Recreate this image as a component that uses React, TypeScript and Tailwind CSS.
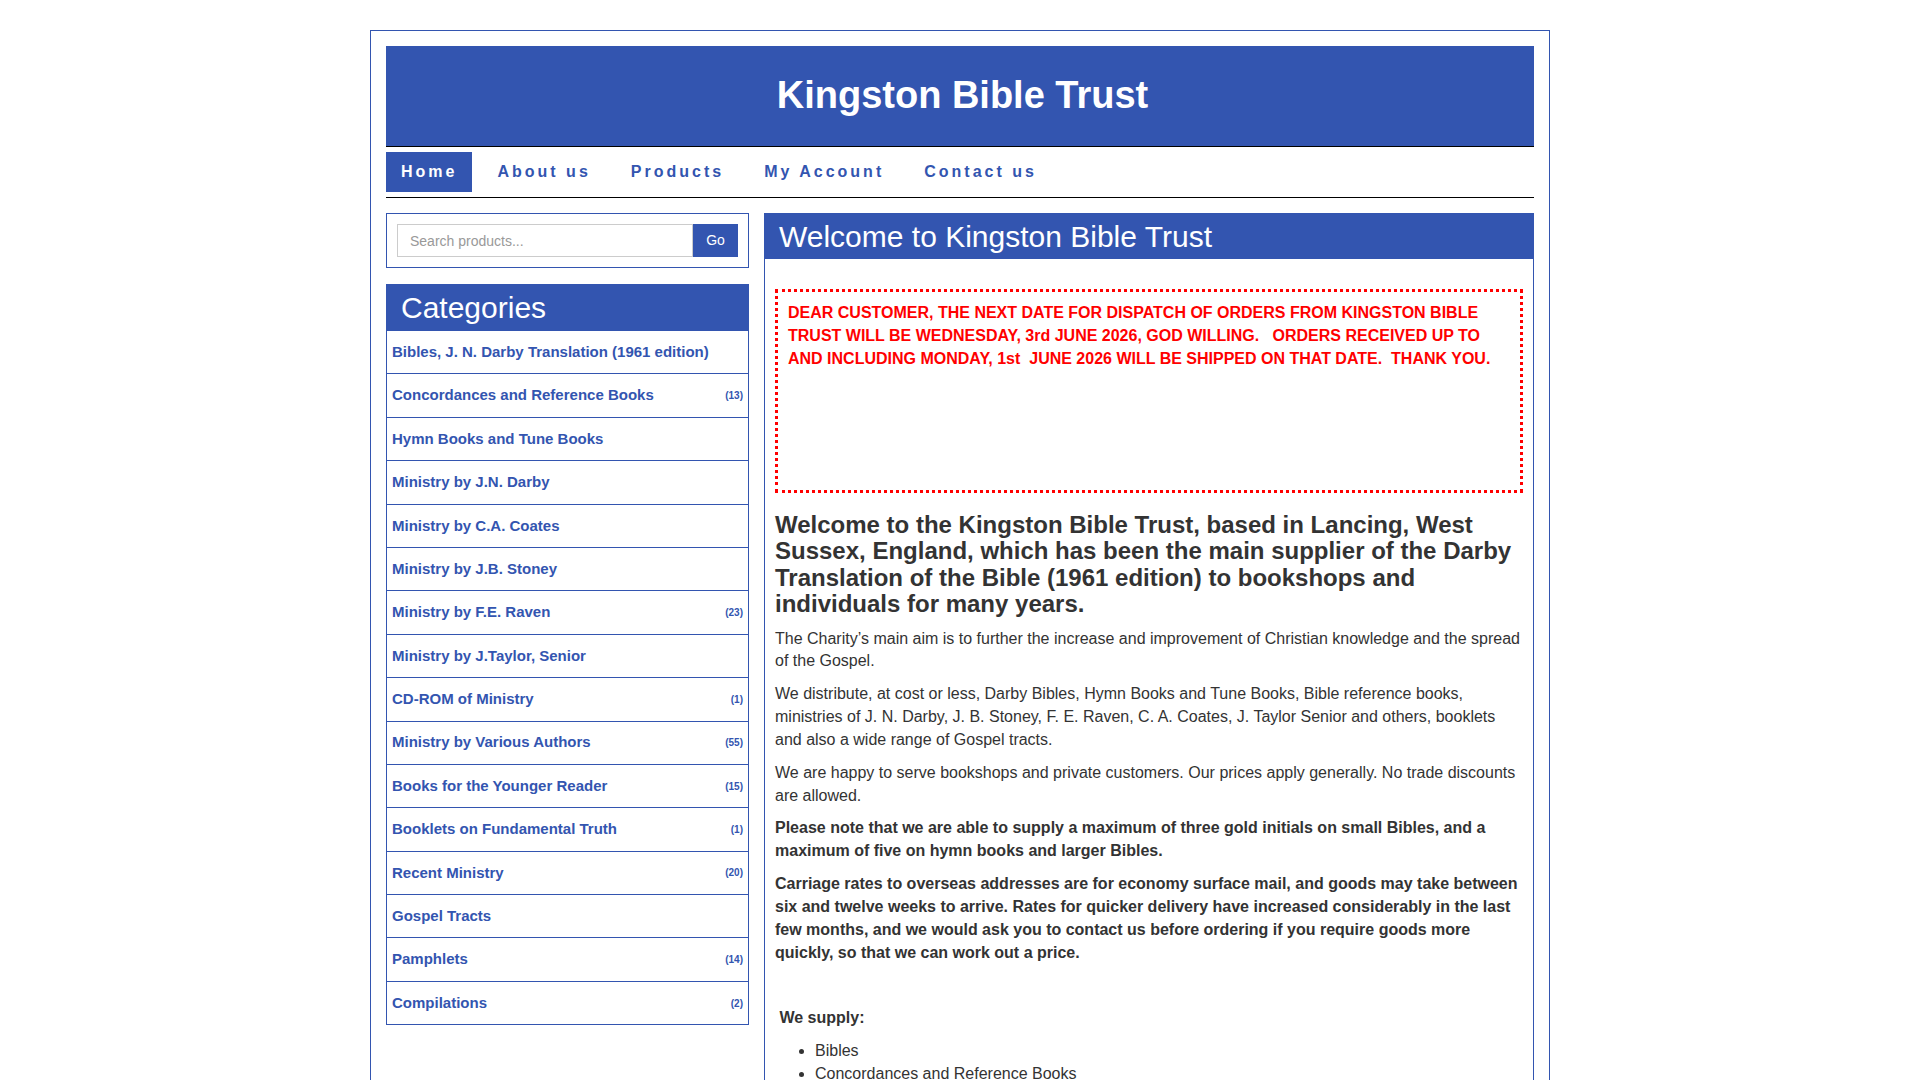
import React from "react";

type Category = { name: string; count?: number };

const categories: Category[] = [
  { name: "Bibles, J. N. Darby Translation (1961 edition)" },
  { name: "Concordances and Reference Books", count: 13 },
  { name: "Hymn Books and Tune Books" },
  { name: "Ministry by J.N. Darby" },
  { name: "Ministry by C.A. Coates" },
  { name: "Ministry by J.B. Stoney" },
  { name: "Ministry by F.E. Raven", count: 23 },
  { name: "Ministry by J.Taylor, Senior" },
  { name: "CD-ROM of Ministry", count: 1 },
  { name: "Ministry by Various Authors", count: 55 },
  { name: "Books for the Younger Reader", count: 15 },
  { name: "Booklets on Fundamental Truth", count: 1 },
  { name: "Recent Ministry", count: 20 },
  { name: "Gospel Tracts" },
  { name: "Pamphlets", count: 14 },
  { name: "Compilations", count: 2 },
];

const navItems = ["Home", "About us", "Products", "My Account", "Contact us"];

const supplies = [
  "Bibles",
  "Concordances and Reference Books",
  "Hymn Books and Tune Books",
  "Ministry by J.N. Darby",
  "Ministry by C.A. Coates",
  "Ministry by J.B. Stoney",
  "Ministry by F.E. Raven",
  "Gospel Tracts",
];

function Sidebar() {
  return (
    <aside className="w-[363px] shrink-0">
      <div className="flex h-[55px] border border-[#3355b0] p-[10px]">
        <input
          className="h-[33px] flex-1 border border-[#cccccc] px-[12px] text-[14px] text-[#555] placeholder-[#999] outline-none"
          placeholder="Search products..."
        />
        <button className="h-[33px] w-[45px] bg-[#3355b0] text-[14px] text-white">Go</button>
      </div>

      <div className="mt-[16px]">
        <div className="flex h-[47px] items-center bg-[#3355b0] pl-[15px] text-[30px] text-white">
          Categories
        </div>
        <ul className="border-x border-[#3355b0]">
          {categories.map((c) => (
            <li
              key={c.name}
              className="flex h-[43.4px] items-center justify-between border-b border-[#3355b0] px-[5px] text-[#3355b0]"
            >
              <span className="text-[15px] font-bold">{c.name}</span>
              {c.count !== undefined && <span className="text-[10px] font-bold">({c.count})</span>}
            </li>
          ))}
        </ul>
      </div>
    </aside>
  );
}

function Main() {
  return (
    <main className="flex min-w-0 flex-1 flex-col">
      <div className="flex h-[46px] items-center bg-[#3355b0] pl-[15px] text-[30px] text-white">
        Welcome to Kingston Bible Trust
      </div>
      <div className="flex-1 border-x border-[#3355b0] px-[10px] pt-[30px] pb-[40px] text-[16px] leading-[1.42857] text-[#333]">
        <div className="h-[204px] border-[3px] border-dotted border-[#ff0000] px-[10px] pt-[9px] leading-[23px] font-bold text-[#ff0000]">
          DEAR CUSTOMER, THE NEXT DATE FOR DISPATCH OF ORDERS FROM KINGSTON BIBLE TRUST WILL BE WEDNESDAY, 3rd
          JUNE 2026, GOD WILLING.{"\u00a0\u00a0"} ORDERS RECEIVED UP TO AND INCLUDING MONDAY, 1st{"\u00a0"} JUNE 2026
          WILL BE SHIPPED ON THAT DATE.{"\u00a0"} THANK YOU.
        </div>

        <h2 className="mt-[19px] mb-[10px] text-[24px] leading-[1.1] font-bold">
          Welcome to the Kingston Bible Trust, based in Lancing, West Sussex, England, which has been the main
          supplier of the Darby Translation of the Bible (1961 edition) to bookshops and individuals for many years.
        </h2>

        <p className="mb-[10px]">
          The Charity’s main aim is to further the increase and improvement of Christian knowledge and the spread of
          the Gospel.
        </p>
        <p className="mb-[10px]">
          We distribute, at cost or less, Darby Bibles, Hymn Books and Tune Books, Bible reference books, ministries
          of J. N. Darby, J. B. Stoney, F. E. Raven, C. A. Coates, J. Taylor Senior and others, booklets and also a
          wide range of Gospel tracts.
        </p>
        <p className="mb-[10px]">
          We are happy to serve bookshops and private customers. Our prices apply generally. No trade discounts are
          allowed.
        </p>
        <p className="mb-[10px] font-bold">
          Please note that we are able to supply a maximum of three gold initials on small Bibles, and a maximum of
          five on hymn books and larger Bibles.
        </p>
        <p className="mb-[10px] font-bold">
          Carriage rates to overseas addresses are for economy surface mail, and goods may take between six and twelve
          weeks to arrive. Rates for quicker delivery have increased considerably in the last few months, and we would
          ask you to contact us before ordering if you require goods more quickly, so that we can work out a price.
        </p>
        <p className="mb-[10px]">{"\u00a0"}</p>
        <p className="mb-[10px] font-bold">{"\u00a0"}We supply:</p>
        <ul className="list-disc pl-[40px]">
          {supplies.map((s) => (
            <li key={s}>{s}</li>
          ))}
        </ul>
      </div>
    </main>
  );
}

export default function App() {
  return (
    <div className="min-h-screen bg-white pt-[30px] font-['Liberation_Sans',Arial,sans-serif]">
      <div className="mx-auto w-[1180px] border border-[#3355b0] px-[15px] pt-[15px] pb-[20px]">
        <header className="flex h-[101px] items-center justify-center border-b border-black bg-[#3355b0] pl-[5px] pb-[2px]">
          <h1 className="text-[38px] font-bold text-white">Kingston Bible Trust</h1>
        </header>

        <nav className="flex border-b border-black py-[5px]">
          {navItems.map((item, i) => (
            <a
              key={item}
              className={`mr-[10px] flex h-[40px] items-center px-[15px] text-[16px] font-bold tracking-[3px] ${
                i === 0 ? "bg-[#3355b0] text-white" : "text-[#3355b0]"
              }`}
            >
              {item}
            </a>
          ))}
        </nav>

        <div className="mt-[15px] flex gap-[15px]">
          <Sidebar />
          <Main />
        </div>
      </div>
    </div>
  );
}
